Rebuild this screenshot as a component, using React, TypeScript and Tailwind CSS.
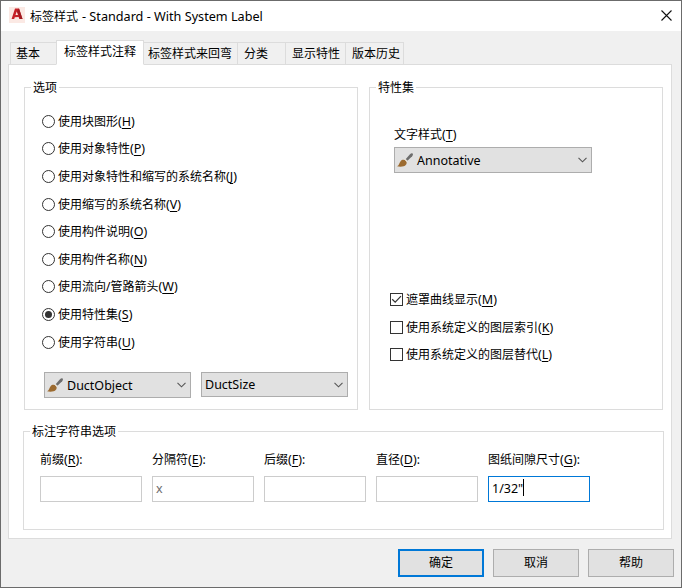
import { ReactNode } from "react";

const tabs = [
  { label: "基本", style: "w-[47px] pl-[5px]" },
  { label: "标签样式注释", active: true, style: "w-[88px] pl-[7px]" },
  { label: "标签样式来回弯", style: "w-[95px] pl-1" },
  { label: "分类", style: "w-[49px] pl-1.5" },
  { label: "显示特性", style: "w-[61px] pl-1.5" },
  { label: "版本历史", style: "w-[59px] pl-1.5" },
];

const options = [
  { label: "使用块图形", hotkey: "H", row: "h-[27px]" },
  { label: "使用对象特性", hotkey: "P", row: "h-7" },
  { label: "使用对象特性和缩写的系统名称", hotkey: "J", row: "h-7" },
  { label: "使用缩写的系统名称", hotkey: "V", row: "h-[27px]" },
  { label: "使用构件说明", hotkey: "O", row: "h-7" },
  { label: "使用构件名称", hotkey: "N", row: "h-[27px]" },
  { label: "使用流向/管路箭头", hotkey: "W", row: "h-7" },
  { label: "使用特性集", hotkey: "S", row: "h-7", checked: true },
  { label: "使用字符串", hotkey: "U", row: "h-7" },
];

const checks = [
  { label: "遮罩曲线显示", hotkey: "M", row: "h-7", checked: true },
  { label: "使用系统定义的图层索引", hotkey: "K", row: "h-[27px]" },
  { label: "使用系统定义的图层替代", hotkey: "L", row: "h-7" },
];

const fields = [
  { label: "前缀", hotkey: "R", value: "" },
  { label: "分隔符", hotkey: "E", value: "x" },
  { label: "后缀", hotkey: "F", value: "" },
  { label: "直径", hotkey: "D", value: "" },
  { label: "图纸间隙尺寸", hotkey: "G", value: '1/32"', focused: true },
];

const Hotkey = ({ char }: { char: string }) => (
  <span className="text-[12.5px]">
    (<span className="underline underline-offset-2">{char}</span>)
  </span>
);

const Group = ({
  title,
  className,
  children,
}: {
  title: string;
  className: string;
  children: ReactNode;
}) => (
  <section className={`border border-[#dcdcdc] ${className}`}>
    <h2 className="-mt-2 ml-1.5 h-4 w-fit bg-white px-0.5 leading-4">
      {title}
    </h2>
    {children}
  </section>
);

const Brush = () => (
  <svg width="16" height="15" viewBox="0 0 16 15" className="mr-1 -ml-px shrink-0">
    <path d="M8.4 6.4 13 1.2Q14.6 -.2 15.7 .6 16.4 1.8 15.2 3.2L10.4 7.8Z" fill="#6d6d6d" />
    <path
      d="M0 13.2C2.2 12.4 2 10 3.6 8.2 5 6.5 7.4 6.2 9 8 10.6 10 9.2 12.6 6.6 13.3 4.6 13.8 2 13.8 0 13.2Z"
      fill="#9c6b30"
    />
    <path d="M7.5 6.6 8.5 5.8 10.7 8 9.7 8.9Z" fill="#e6dfd3" />
  </svg>
);

const Combo = ({
  value,
  icon,
  className,
}: {
  value: string;
  icon?: boolean;
  className: string;
}) => (
  <div
    className={`flex items-center border border-[#adadad] bg-[#e1e1e1] pr-1 pl-[3px] ${className}`}
  >
    {icon && <Brush />}
    <span className={`flex-1 text-[12.5px] leading-4 ${icon ? "pt-0.5" : ""}`}>
      {value}
    </span>
    <svg width="9" height="6" viewBox="0 0 9 6" fill="none">
      <path d="M.5.8 4.5 4.8 8.5.8" stroke="#555" strokeWidth="1.1" />
    </svg>
  </div>
);

const Button = ({ label, primary }: { label: string; primary?: boolean }) => (
  <button
    className={`h-7 w-[86px] bg-[#e1e1e1] ${primary ? "border-2 border-[#0078d7]" : "border border-[#adadad]"}`}
  >
    {label}
  </button>
);

const App = () => {
  return (
    <div className="flex h-[588px] w-[682px] flex-col border border-[#6b6b6b] bg-[#f0f0f0] font-['Noto_Sans','Noto_Sans_CJK_SC',sans-serif] text-xs text-black">
      {/* Title bar */}
      <header className="flex h-[30px] shrink-0 items-center bg-white pr-[9px] pb-0.5 pl-2">
        <svg width="16" height="16" viewBox="0 0 16 16" className="mr-[5px]">
          <rect width="16" height="16" fill="#fbe9e4" />
          <path
            d="M6 1.5h4L13.5 12h-3.2l-.7-2-3.8.2L5.2 12H2.6ZM7.7 4.4 6.5 8H9Z"
            fill="#c62128"
          />
          <path d="M10 1.5 13.5 12h-2.3L8.2 4Z" fill="#9f1c22" />
        </svg>
        <h1 className="flex-1 pt-0.5 leading-4">
          标签样式
          <span className="ml-1 text-[12.65px]">- Standard - With System Label</span>
        </h1>
        <svg width="11" height="11" viewBox="0 0 11 11" className="mt-px">
          <path d="M.5.5l10 10M10.5.5l-10 10" stroke="#111" strokeWidth="1.1" />
        </svg>
      </header>

      {/* Tabs */}
      <nav className="-mb-px flex h-[34px] shrink-0 items-end pl-[9px]">
        {tabs.map((tab) => (
          <div
            key={tab.label}
            className={`-mr-px border border-[#dcdcdc] ${tab.style} ${
              tab.active
                ? "z-10 h-[25px] border-b-white bg-white leading-[22px]"
                : "h-[23px] leading-[22px]"
            }`}
          >
            {tab.label}
          </div>
        ))}
      </nav>

      <main className="mx-[7px] h-[475px] w-[664px] shrink-0 border border-[#dcdcdc] bg-white pt-[22px] pl-3.5">
        <div className="flex gap-[11px] pl-px">
          <Group title="选项" className="h-[323px] w-[334px]">
            <div className="mt-[12px] ml-[17px]">
              {options.map((option) => (
                <div
                  key={option.hotkey}
                  className={`flex items-start pt-[5px] ${option.row}`}
                >
                  <span className="mt-[2px] mr-[3px] flex size-[13px] items-center justify-center rounded-full border border-[#333]">
                    {option.checked && (
                      <span className="size-[7px] rounded-full bg-[#333]" />
                    )}
                  </span>
                  <span className="leading-[17px]">
                    {option.label}
                    <Hotkey char={option.hotkey} />
                  </span>
                </div>
              ))}
            </div>
            <div className="mt-[15px] ml-[19px] flex gap-2.5">
              <Combo value="DuctObject" icon className="h-[26px] w-[147px]" />
              <Combo value="DuctSize" className="h-[25px] w-[147px]" />
            </div>
          </Group>

          <Group title="特性集" className="h-[323px] w-[294px]">
            <div className="mt-[31px] ml-6 leading-4">
              文字样式
              <Hotkey char="T" />
            </div>
            <Combo
              value="Annotative"
              icon
              className="mt-1 ml-6 h-[26px] w-[198px]"
            />
            <div className="mt-[113px] ml-5">
              {checks.map((check) => (
                <div
                  key={check.hotkey}
                  className={`flex items-start pt-[5px] ${check.row}`}
                >
                  <span className="mt-[2px] mr-[3px] size-[13px] border border-[#333]">
                    {check.checked && (
                      <svg width="11" height="11" viewBox="0 0 11 11" fill="none">
                        <path d="M1.2 5.3 4.2 8.2 10 2.2" stroke="#333" strokeWidth="1.2" />
                      </svg>
                    )}
                  </span>
                  <span className="leading-[17px]">
                    {check.label}
                    <Hotkey char={check.hotkey} />
                  </span>
                </div>
              ))}
            </div>
          </Group>
        </div>

        <Group title="标注字符串选项" className="mt-[21px] h-[99px] w-[641px]">
          <div className="mt-3 ml-4 flex gap-2.5">
            {fields.map((field) => (
              <div key={field.hotkey} className="w-[102px]">
                <div className="leading-4">
                  {field.label}
                  <Hotkey char={field.hotkey} />:
                </div>
                <div
                  className={`mt-2 flex h-[26px] items-start border pt-0.5 pl-[3px] text-[12.5px] leading-[19px] ${
                    field.focused
                      ? "border-[#0078d7]"
                      : "border-[#cccccc] text-[#6d6d6d]"
                  }`}
                >
                  {field.value}
                  {field.focused && <span className="h-[17px] w-px bg-black" />}
                </div>
              </div>
            ))}
          </div>
        </Group>
      </main>

      {/* Dialog actions */}
      <footer className="mt-2.5 flex justify-end gap-[9px] pr-[7px]">
        <Button label="确定" primary />
        <Button label="取消" />
        <Button label="帮助" />
      </footer>
    </div>
  );
};

export default App;
